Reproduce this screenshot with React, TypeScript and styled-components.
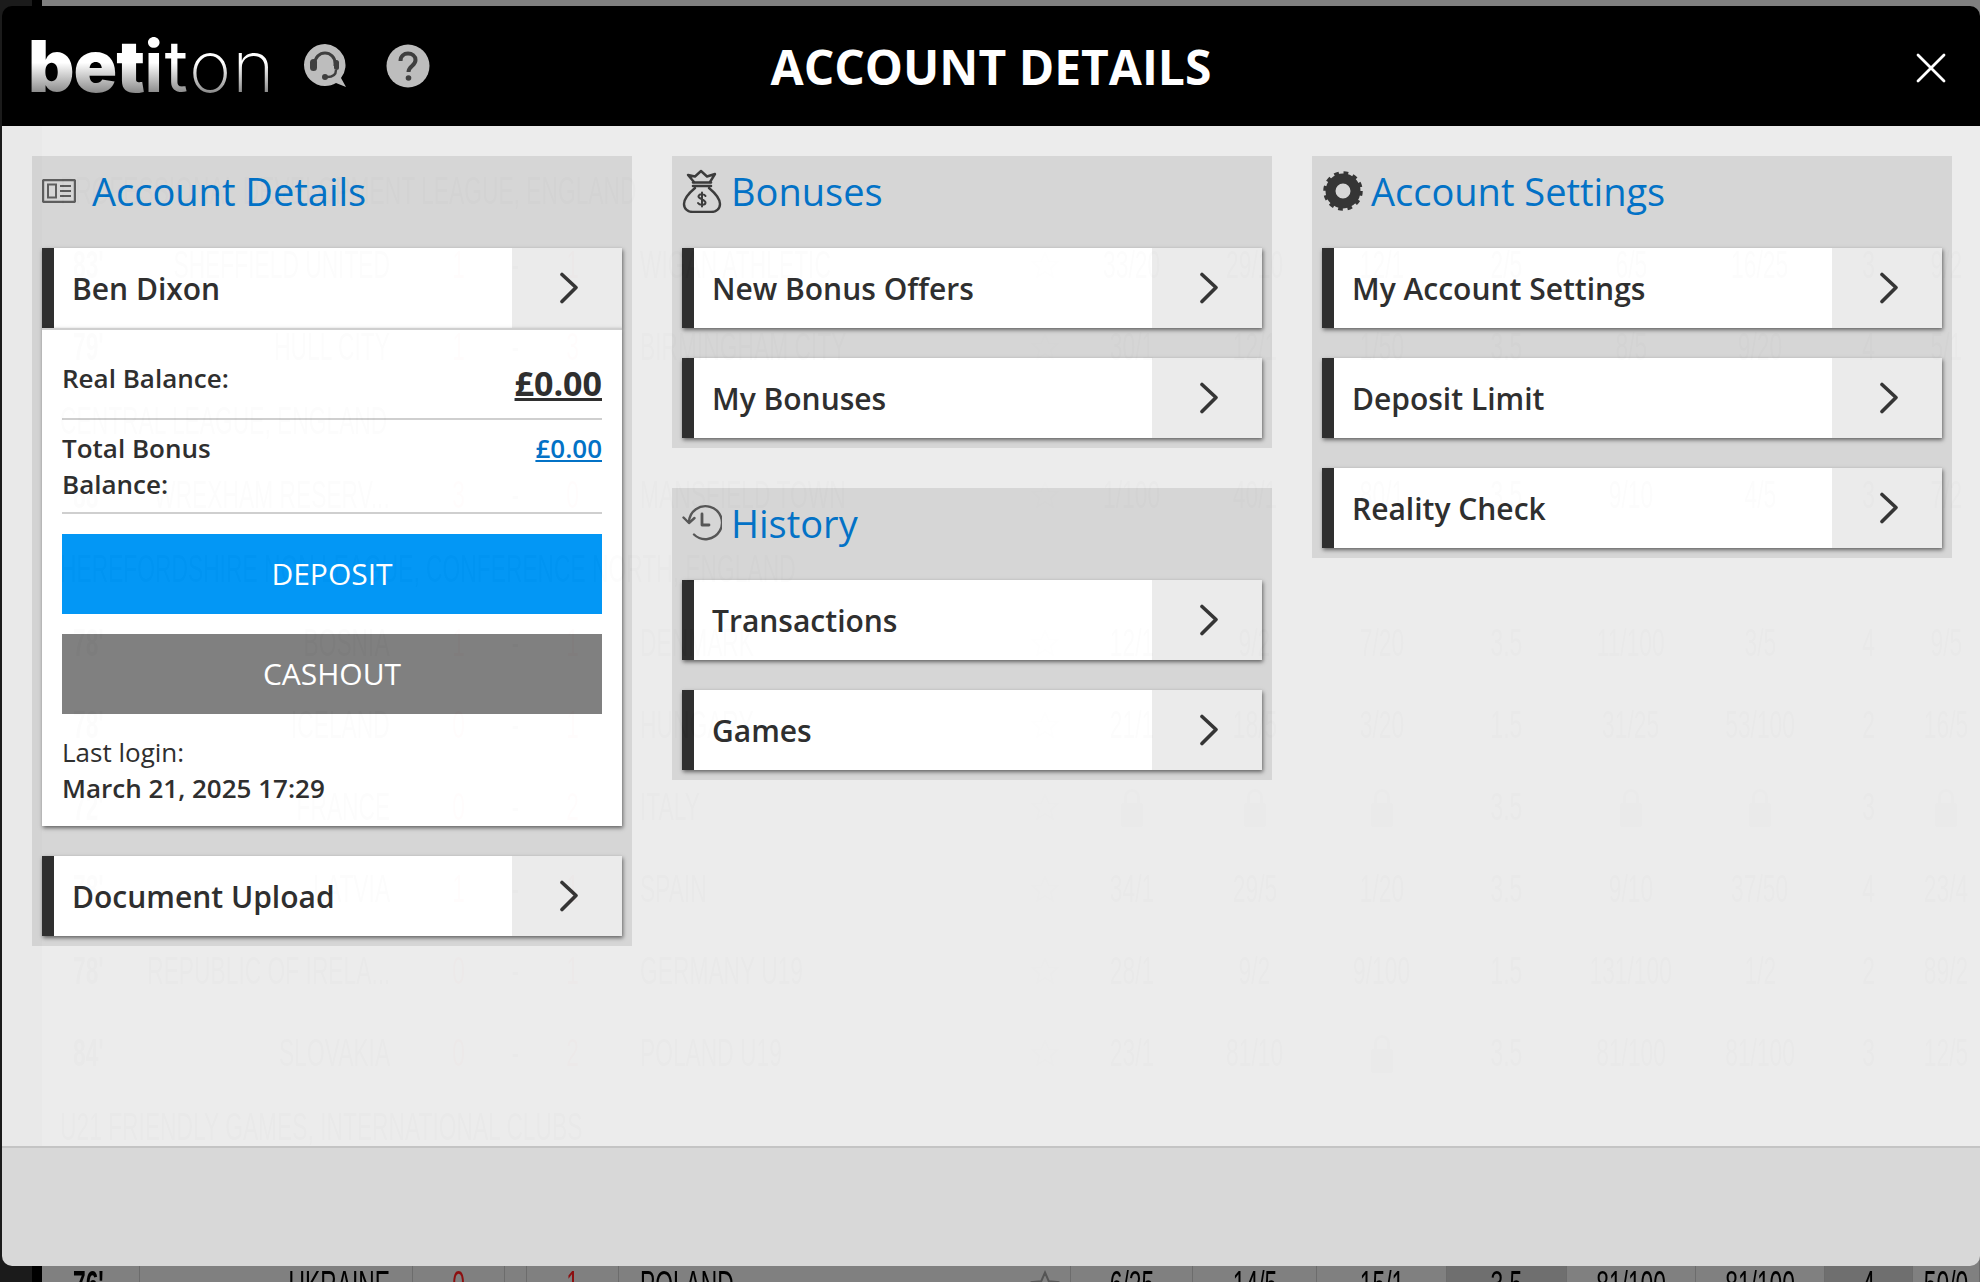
import React from "react";
import styled, { createGlobalStyle } from "styled-components";

const GlobalStyle = createGlobalStyle`
  html, body {
    margin: 0;
    padding: 0;
    background: #808080;
    overflow: hidden;
  }
  * {
    box-sizing: border-box;
  }
`;

const FONT = `"Open Sans", "Noto Sans", sans-serif`;

/* ---------- the odds table behind the dialog ---------- */

const Page = styled.div`
  position: relative;
  display: flex;
  width: 1980px;
  height: 1282px;
  overflow: hidden;
  background: #808080;
`;

const SideRail = styled.div`
  flex: none;
  width: 32px;
  background: #1b1b1b;
`;

const RailGap = styled.div`
  flex: none;
  width: 10px;
  background: #000;
`;

const Table = styled.div`
  flex: 1;
  min-width: 0;
  padding-top: 158px;
  font-family: "Liberation Sans", Arial, sans-serif;
  font-size: 38px;
  color: #000;
`;

// no condensed face is installed, so the table text is squeezed sideways
const Narrow = styled.span<{ $origin?: string }>`
  display: inline-block;
  flex: none;
  white-space: nowrap;
  transform: scaleX(0.6);
  transform-origin: ${(p) => p.$origin || "center"};
`;

const LeagueRow = styled.div`
  height: 66px;
  padding-left: 18px;
  line-height: 66px;
  white-space: nowrap;
`;

const Spacer = styled.div`
  height: 84px;
`;

const MatchRow = styled.div`
  display: grid;
  grid-template-columns: 98px 273px 92px 22px 92px 452px 122px 124px 130px 120px 129px 129px 88px 1fr;
  height: 82px;
  line-height: 82px;
`;

const Minute = styled.div`
  padding-left: 31px;
  font-weight: 700;
  border-right: 1px solid #6c6c6c;
`;

const Home = styled.div`
  display: flex;
  justify-content: flex-end;
  padding-right: 22px;
  border-right: 1px solid #6c6c6c;
`;

const Score = styled.div`
  text-align: center;
  color: #8c0f10;
  border-right: 1px solid #6c6c6c;
`;

const Dash = styled.div`
  text-align: center;
  border-right: 1px solid #6c6c6c;
`;

const Away = styled.div`
  display: flex;
  align-items: center;
  justify-content: space-between;
  padding: 0 10px 0 21px;
  border-right: 1px solid #6c6c6c;
`;

const Odds = styled.div<{ $dark?: boolean }>`
  display: flex;
  align-items: center;
  justify-content: center;
  min-width: 0;
  border-right: 1px solid #6c6c6c;
  background: ${(p) => (p.$dark ? "#6f6f6f" : "transparent")};
`;

const Star = () => (
  <svg width="30" height="30" viewBox="0 0 24 24" fill="none" stroke="#555" strokeWidth="1.6">
    <path d="M12 2l3 7 7 .6-5.4 4.7 1.7 7.2L12 17.6l-6.3 3.900 1.700-7.200L2 9.600 9 9z" />
  </svg>
);

const Lock = () => (
  <svg width="24" height="44" viewBox="0 0 24 44" fill="#333">
    <path d="M4 18v-6a8 8 0 0116 0v6h-3v-6a5 5 0 00-10 0v6z" />
    <rect x="1" y="18" width="22" height="24" rx="2" />
  </svg>
);

type Match = {
  min: string;
  home: string;
  s1: string;
  s2: string;
  away: string;
  odds: string[];
};

const oddsCell = (o: string, i: number) => (
  <Odds key={i} $dark={i === 3 || i === 6}>
    {o === "lock" ? <Lock /> : <Narrow>{o}</Narrow>}
  </Odds>
);

const MatchLine = ({ m }: { m: Match }) => (
  <MatchRow>
    <Minute>
      <Narrow $origin="left">{m.min}</Narrow>
    </Minute>
    <Home>
      <Narrow $origin="right">{m.home}</Narrow>
    </Home>
    <Score>
      <Narrow>{m.s1}</Narrow>
    </Score>
    <Dash>
      <Narrow>-</Narrow>
    </Dash>
    <Score>
      <Narrow>{m.s2}</Narrow>
    </Score>
    <Away>
      <Narrow $origin="left">{m.away}</Narrow>
      <Star />
    </Away>
    {m.odds.map(oddsCell)}
  </MatchRow>
);

const groupOne: Match[] = [
  { min: "83'", home: "SHEFFIELD UNITED", s1: "1", s2: "1", away: "WIGAN ATHLETIC", odds: ["33/20", "29/10", "12/1", "2/5", "6/5", "16/25", "3", "9/2"] },
  { min: "79'", home: "HULL CITY", s1: "1", s2: "3", away: "BIRMINGHAM CITY", odds: ["30/1", "12/1", "1/50", "3.5", "8/5", "9/20", "4", "5/1"] },
];

const groupTwo: Match[] = [
  { min: "88'", home: "WREXHAM RESERV...", s1: "3", s2: "0", away: "MANSFIELD TOWN", odds: ["1/100", "40/1", "80/1", "3.5", "9/10", "4/5", "3", "7/2"] },
];

const groupThree: Match[] = [
  { min: "78'", home: "BOSNIA", s1: "1", s2: "1", away: "DENMARK", odds: ["12/1", "9/2", "7/20", "3.5", "11/100", "3/5", "4", "9/5"] },
  { min: "78'", home: "ICELAND", s1: "0", s2: "1", away: "HUNGARY", odds: ["21/1", "18/5", "3/20", "1.5", "31/25", "53/100", "2", "16/5"] },
  { min: "72'", home: "FRANCE", s1: "0", s2: "2", away: "ITALY", odds: ["lock", "lock", "lock", "3.5", "lock", "lock", "3", "lock"] },
  { min: "78'", home: "LATVIA", s1: "1", s2: "1", away: "SPAIN", odds: ["34/1", "29/5", "1/20", "3.5", "9/10", "37/50", "4", "23/4"] },
  { min: "78'", home: "REPUBLIC OF IRELA...", s1: "0", s2: "1", away: "GERMANY U19", odds: ["28/1", "9/2", "9/100", "1.5", "131/100", "1/2", "2", "89/2"] },
  { min: "84'", home: "SLOVAKIA", s1: "0", s2: "2", away: "POLAND U19", odds: ["23/1", "81/10", "lock", "3.5", "81/100", "81/100", "3", "12/5"] },
];

const lastMatch: Match = {
  min: "76'",
  home: "UKRAINE",
  s1: "0",
  s2: "1",
  away: "POLAND",
  odds: ["6/25", "14/5", "15/1", "3.5", "81/100", "81/100", "4", "50/0"],
};

/* ---------- dialog ---------- */

const Modal = styled.div`
  position: absolute;
  top: 6px;
  left: 2px;
  right: 0;
  bottom: 16px;
  display: flex;
  flex-direction: column;
  border-radius: 10px;
  overflow: hidden;
  font-family: ${FONT};
`;

const Header = styled.header`
  position: relative;
  flex: none;
  display: flex;
  align-items: center;
  justify-content: center;
  height: 120px;
  padding-top: 2px;
  background: #000;
`;

const HeaderLeft = styled.div`
  position: absolute;
  left: 26px;
  top: 18px;
  display: flex;
  align-items: center;
`;

const Logo = styled.div`
  font-family: Inter, "Open Sans", sans-serif;
  font-size: 72px;
  line-height: 84px;
  color: transparent;
  background: linear-gradient(180deg, #fff 0 46%, #8a8a8a 82%);
  -webkit-background-clip: text;
  background-clip: text;
`;

const LogoPart = styled.span<{ $weight: number; $spacing: number }>`
  font-weight: ${(p) => p.$weight};
  letter-spacing: ${(p) => p.$spacing}px;
`;

const RoundButton = styled.div<{ $gap: number }>`
  display: flex;
  margin-left: ${(p) => p.$gap}px;
`;

const DialogTitle = styled.h1`
  margin: 0;
  font-size: 48px;
  font-weight: 700;
  line-height: 1;
  color: #fff;
`;

const Close = styled.div`
  position: absolute;
  right: 34px;
  top: 47px;
  display: flex;
`;

const BodyGlass = styled.div`
  flex: 1;
  backdrop-filter: brightness(2);
`;

const Body = styled.div`
  display: grid;
  grid-template-columns: 600px 600px 640px;
  gap: 40px;
  align-items: start;
  height: 100%;
  padding: 30px 0 0 30px;
  background: #ececec;
  opacity: 0.988;
`;

const Footer = styled.footer`
  flex: none;
  height: 120px;
  background: #d8d8d8;
  border-top: 2px solid #c4c4c4;
`;

const Column = styled.div`
  display: flex;
  flex-direction: column;
  gap: 40px;
`;

const Panel = styled.section`
  display: flex;
  flex-direction: column;
  padding: 0 10px 10px;
  background: #d6d6d6;
`;

const PanelHead = styled.div`
  display: flex;
  align-items: center;
  height: 92px;
  padding-bottom: 22px;
`;

const IconSlot = styled.div<{ $w: number }>`
  display: flex;
  align-items: center;
  flex: none;
  width: ${(p) => p.$w}px;
`;

const PanelTitle = styled.h2`
  margin: 0;
  font-size: 38px;
  font-weight: 400;
  line-height: 50px;
  color: #0071c6;
`;

const Rows = styled.div`
  display: flex;
  flex-direction: column;
  gap: 30px;
`;

const RowBox = styled.div`
  display: flex;
  flex-direction: column;
`;

const NavRow = styled.div`
  display: flex;
  height: 80px;
  background: #fff;
  border-left: 12px solid #2d2d2d;
  box-shadow: 1px 2px 4px rgba(0, 0, 0, 0.55);
`;

const NavLabel = styled.div`
  flex: 1;
  display: flex;
  align-items: center;
  padding-left: 18px;
  font-size: 30px;
  font-weight: 600;
  color: #2d2d2d;
`;

const NavArrow = styled.div`
  flex: none;
  display: flex;
  align-items: center;
  justify-content: center;
  width: 110px;
  padding-left: 4px;
  background: #ebebeb;
`;

const Card = styled.div`
  display: flex;
  flex-direction: column;
  padding: 0 20px;
  background: #fff;
  border-top: 2px solid #cfcfcf;
  box-shadow: 1px 2px 4px rgba(0, 0, 0, 0.55);
  font-size: 26px;
  line-height: 36px;
  color: #2d2d2d;
`;

const BalanceRow = styled.div<{ $top: number; $bottom: number }>`
  display: flex;
  justify-content: space-between;
  align-items: flex-start;
  padding: ${(p) => p.$top}px 0 ${(p) => p.$bottom}px;
  border-bottom: 2px solid #cfcfcf;
`;

const BalanceLabel = styled.div`
  width: 200px;
  font-weight: 600;
`;

const RealValue = styled.div`
  font-size: 34px;
  font-weight: 700;
  line-height: 46px;
  text-decoration: underline;
`;

const BonusValue = styled.div`
  font-weight: 600;
  color: #0071c6;
  text-decoration: underline;
`;

const ActionButton = styled.div<{ $bg: string; $top: number }>`
  display: flex;
  align-items: center;
  justify-content: center;
  height: 80px;
  margin-top: ${(p) => p.$top}px;
  background: ${(p) => p.$bg};
  font-size: 30px;
  color: #fff;
`;

const LoginInfo = styled.div`
  padding: 20px 0 20px;
`;

const LoginDate = styled.div`
  font-weight: 600;
`;

/* ---------- icons ---------- */

const Chevron = () => (
  <svg width="20" height="32" viewBox="0 0 20 32" fill="none" stroke="#333" strokeWidth="3.6" strokeLinecap="round" strokeLinejoin="round">
    <path d="M3 2.5 L17 15.5 L3 29.5" />
  </svg>
);

const CloseIcon = () => (
  <svg width="30" height="30" viewBox="0 0 30 30" stroke="#fff" strokeWidth="2.8" strokeLinecap="round">
    <path d="M2 2L28 28M28 2L2 28" />
  </svg>
);

const HeadsetIcon = () => (
  <svg width="46" height="46" viewBox="0 0 46 46">
    <path d="M22 1a21 21 0 100 42c4 0 8-1 11-3l10 4-5-9a21 21 0 00-16-34z" fill="#bdbdbd" />
    <path d="M12 23v-3a10 10 0 0120 0v3" fill="none" stroke="#3f3f3f" strokeWidth="3" />
    <rect x="7" y="16" width="7" height="12" rx="3.5" fill="#3f3f3f" />
    <rect x="31" y="17" width="5" height="10" rx="2.5" fill="#3f3f3f" />
    <path d="M33 27c0 5-4 7-9 7" fill="none" stroke="#3f3f3f" strokeWidth="2.4" />
    <circle cx="22" cy="34" r="3" fill="#3f3f3f" />
  </svg>
);

const HelpIcon = () => (
  <svg width="44" height="44" viewBox="0 0 44 44">
    <circle cx="22" cy="22" r="21.5" fill="#bdbdbd" />
    <path d="M14.5 17c0-5 3.5-7.5 7.5-7.5s7.5 2.5 7.5 6.5c0 6-7 6-7 12" fill="none" stroke="#3f3f3f" strokeWidth="4" />
    <circle cx="22.5" cy="34" r="2.8" fill="#3f3f3f" />
  </svg>
);

const CardIcon = () => (
  <svg width="34" height="24" viewBox="0 0 34 24" fill="none" stroke="#5d5d5d" strokeWidth="2">
    <rect x="1" y="1" width="32" height="22" rx="1.5" strokeWidth="2.4" />
    <rect x="6" y="5.5" width="8" height="13" />
    <path d="M18 7h11M18 12h11M18 17h11" strokeWidth="2.2" />
  </svg>
);

const BagIcon = () => (
  <svg width="40" height="44" viewBox="0 0 40 44" fill="none" stroke="#3a3a3a" strokeWidth="2.4" strokeLinejoin="round" strokeLinecap="round">
    <path d="M12 13L6 6l7 1.5L19 2l6 5.5L33 5l-5 8" />
    <path d="M11 13.5h18M11 17h18" strokeWidth="2.6" />
    <path d="M13 19C7 24 2 29 2 35c0 5 4 8 9 8h18c5 0 9-3 9-8 0-6-5-11-11-16" />
    <path d="M23.5 27c-1-2-6-2.5-7 0s7 3.500 7 6.500-6 3-7.500.5M20 23.500v14" strokeWidth="2" />
  </svg>
);

const HistoryIcon = () => (
  <svg width="40" height="38" viewBox="0 0 40 38" fill="none" stroke="#555" strokeWidth="2.4" strokeLinecap="round" strokeLinejoin="round">
    <path d="M7 18a16.500 16.500 0 1 1 5 12.500" />
    <path d="M1.500 13.500L7 19l5.500-5" />
    <path d="M20 10v11h7" strokeWidth="2.8" />
  </svg>
);

const GearIcon = () => (
  <svg width="42" height="42" viewBox="0 0 42 42" fill="none" stroke="#333">
    <circle cx="21" cy="21" r="12.500" strokeWidth="10" />
    <circle cx="21" cy="21" r="18" strokeWidth="3.500" strokeDasharray="4.712 4.712" />
  </svg>
);

/* ---------- page ---------- */

const Nav = ({ label }: { label: string }) => (
  <NavRow>
    <NavLabel>{label}</NavLabel>
    <NavArrow>
      <Chevron />
    </NavArrow>
  </NavRow>
);

const League = ({ name }: { name: string }) => (
  <LeagueRow>
    <Narrow $origin="left">{name}</Narrow>
  </LeagueRow>
);

const App: React.FC = () => {
  return (
    <Page>
      <GlobalStyle />
      <SideRail />
      <RailGap />
      <Table>
        <League name="PROFESSIONAL DEVELOPMENT LEAGUE, ENGLAND" />
        {groupOne.map((m) => (
          <MatchLine key={m.home} m={m} />
        ))}
        <League name="CENTRAL LEAGUE, ENGLAND" />
        {groupTwo.map((m) => (
          <MatchLine key={m.home} m={m} />
        ))}
        <League name="HEREFORDSHIRE NON LEAGUE, CONFERENCE NORTH, ENGLAND" />
        {groupThree.map((m) => (
          <MatchLine key={m.home} m={m} />
        ))}
        <League name="U21 FRIENDLY GAMES, INTERNATIONAL CLUBS" />
        <Spacer />
        <MatchLine m={lastMatch} />
      </Table>

      <Modal>
        <Header>
          <HeaderLeft>
            <Logo>
              <LogoPart $weight={900} $spacing={-1}>bet</LogoPart>
              <LogoPart $weight={700} $spacing={1}>i</LogoPart>
              <LogoPart $weight={400} $spacing={1}>t</LogoPart>
              <LogoPart $weight={200} $spacing={1}>on</LogoPart>
            </Logo>
            <RoundButton $gap={28}>
              <HeadsetIcon />
            </RoundButton>
            <RoundButton $gap={37}>
              <HelpIcon />
            </RoundButton>
          </HeaderLeft>
          <DialogTitle>ACCOUNT DETAILS</DialogTitle>
          <Close>
            <CloseIcon />
          </Close>
        </Header>

        <BodyGlass>
          <Body>
            <Column>
              <Panel>
                <PanelHead>
                  <IconSlot $w={50}>
                    <CardIcon />
                  </IconSlot>
                  <PanelTitle>Account Details</PanelTitle>
                </PanelHead>
                <Rows>
                  <RowBox>
                    <Nav label="Ben Dixon" />
                    <Card>
                      <BalanceRow $top={30} $bottom={12}>
                        <BalanceLabel>Real Balance:</BalanceLabel>
                        <RealValue>£0.00</RealValue>
                      </BalanceRow>
                      <BalanceRow $top={10} $bottom={10}>
                        <BalanceLabel>Total Bonus Balance:</BalanceLabel>
                        <BonusValue>£0.00</BonusValue>
                      </BalanceRow>
                      <ActionButton $bg="#0096f5" $top={20}>
                        DEPOSIT
                      </ActionButton>
                      <ActionButton $bg="#7f7f7f" $top={20}>
                        CASHOUT
                      </ActionButton>
                      <LoginInfo>
                        <div>Last login:</div>
                        <LoginDate>March 21, 2025 17:29</LoginDate>
                      </LoginInfo>
                    </Card>
                  </RowBox>
                  <Nav label="Document Upload" />
                </Rows>
              </Panel>
            </Column>

            <Column>
              <Panel>
                <PanelHead>
                  <IconSlot $w={49}>
                    <BagIcon />
                  </IconSlot>
                  <PanelTitle>Bonuses</PanelTitle>
                </PanelHead>
                <Rows>
                  <Nav label="New Bonus Offers" />
                  <Nav label="My Bonuses" />
                </Rows>
              </Panel>
              <Panel>
                <PanelHead>
                  <IconSlot $w={49}>
                    <HistoryIcon />
                  </IconSlot>
                  <PanelTitle>History</PanelTitle>
                </PanelHead>
                <Rows>
                  <Nav label="Transactions" />
                  <Nav label="Games" />
                </Rows>
              </Panel>
            </Column>

            <Column>
              <Panel>
                <PanelHead>
                  <IconSlot $w={49}>
                    <GearIcon />
                  </IconSlot>
                  <PanelTitle>Account Settings</PanelTitle>
                </PanelHead>
                <Rows>
                  <Nav label="My Account Settings" />
                  <Nav label="Deposit Limit" />
                  <Nav label="Reality Check" />
                </Rows>
              </Panel>
            </Column>
          </Body>
        </BodyGlass>

        <Footer />
      </Modal>
    </Page>
  );
};

export default App;
